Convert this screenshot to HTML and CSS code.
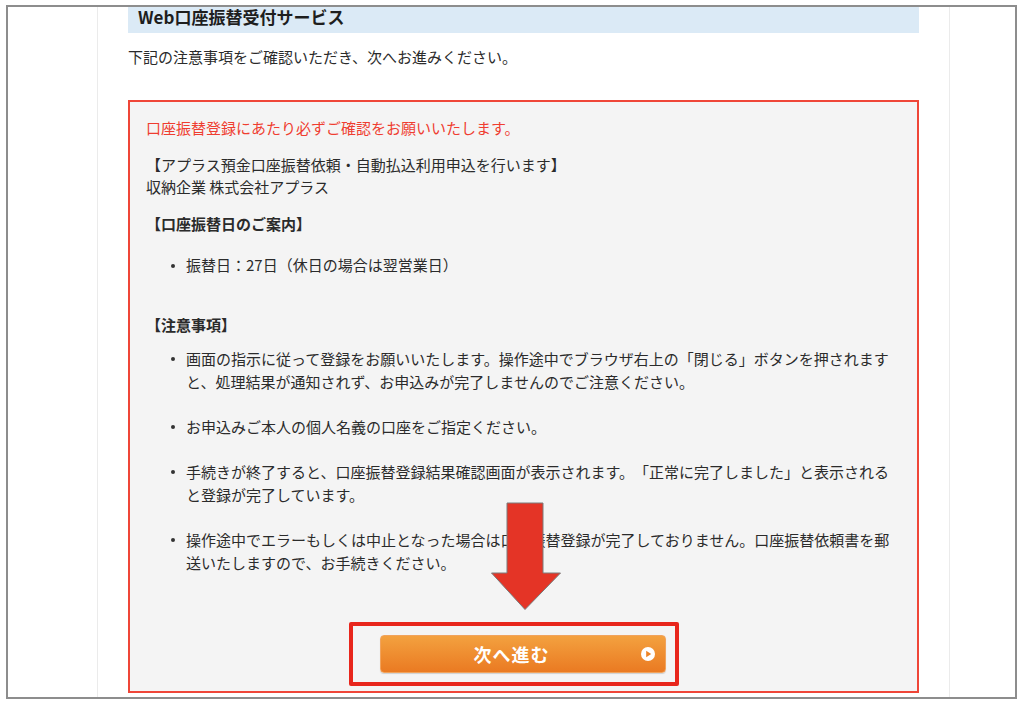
FILE: index.html
```html
<!DOCTYPE html>
<html lang="ja">
<head>
<meta charset="utf-8">
<title>Web口座振替受付サービス</title>
<link rel="stylesheet" href="styles.css">
</head>
<body>
<div class="frame">
  <div class="column">
    <h1 class="title">Web口座振替受付サービス</h1>
    <p class="intro">下記の注意事項をご確認いただき、次へお進みください。</p>
    <div class="notice">
      <p class="lead">口座振替登録にあたり必ずご確認をお願いいたします。</p>
      <p class="company">【アプラス預金口座振替依頼・自動払込利用申込を行います】<br>収納企業 株式会社アプラス</p>
      <p class="heading">【口座振替日のご案内】</p>
      <ul class="list list-date">
        <li>振替日：27日（休日の場合は翌営業日）</li>
      </ul>
      <p class="heading heading-caution">【注意事項】</p>
      <ul class="list list-caution">
        <li>画面の指示に従って登録をお願いいたします。操作途中でブラウザ右上の「閉じる」ボタンを押されますと、処理結果が通知されず、お申込みが完了しませんのでご注意ください。</li>
        <li>お申込みご本人の個人名義の口座をご指定ください。</li>
        <li>手続きが終了すると、口座振替登録結果確認画面が表示されます。「正常に完了しました」と表示されると登録が完了しています。</li>
        <li>操作途中でエラーもしくは中止となった場合は口座振替登録が完了しておりません。口座振替依頼書を郵送いたしますので、お手続きください。</li>
      </ul>
      <div class="actions">
        <button class="next-btn" type="button">次へ進む<span class="next-icon"><svg width="14" height="14" viewBox="0 0 14 14"><circle cx="7" cy="7" r="7" fill="#fff"/><polygon points="5.2,3.8 10.2,7 5.2,10.2" fill="#ee8426"/></svg></span></button>
      </div>
      <svg class="arrow" width="72" height="110" viewBox="0 0 72 110"><polygon points="17,1 53,1 53,71 70.5,71 35,107.5 1.5,71 17,71" fill="#e43426" stroke="#7a7a7a" stroke-width="1"/></svg>
      <div class="highlight"></div>
    </div>
  </div>
</div>
</body>
</html>
```

FILE: styles.css
```css
html, body {
  margin: 0;
  padding: 0;
  background: #ffffff;
}

body {
  font-family: "Noto Sans CJK JP", "Noto Sans", sans-serif;
  color: #2b2b2b;
  font-size: 15px;
  line-height: 22px;
  text-spacing-trim: space-all;
  font-feature-settings: normal;
}

.frame {
  box-sizing: border-box;
  margin: 5px 0 0 6px;
  width: 1011px;
  height: 694px;
  border: 2px solid #8d8d8d;
  background: #ffffff;
  overflow: hidden;
}

.column {
  box-sizing: border-box;
  width: 853px;
  height: 100%;
  margin-left: 89px;
  padding: 0 30px;
  border-left: 1px solid #ebebeb;
  border-right: 1px solid #ebebeb;
}

.title {
  margin: 0;
  height: 26px;
  padding-left: 10px;
  background: #dbeaf6;
  font-size: 17px;
  font-weight: bold;
  line-height: 20px;
  color: #1e1e1e;
}

.intro {
  margin: 13px 0 32px;
  line-height: 22px;
}

.notice {
  position: relative;
  border: 2px solid #ef4638;
  background: #f4f4f4;
  padding: 15px 18px 18px 16px;
}

.notice p {
  margin: 0;
}

.lead {
  color: #ef3d30;
  margin-bottom: 15px !important;
}

.company {
  margin-bottom: 15px !important;
}

.heading {
  font-weight: bold;
}

.heading-caution {
  margin-top: 38px !important;
}

.list {
  margin: 19px 0 0;
  padding-left: 40px;
  list-style: none;
}

.list li {
  position: relative;
}

.list li::before {
  content: "";
  position: absolute;
  left: -15px;
  top: 10px;
  width: 4px;
  height: 4px;
  border-radius: 50%;
  background: #333333;
}

.list-caution {
  margin-top: 11px;
}

.list-caution li {
  line-height: 23px;
  margin-bottom: 22px;
}

.list-caution li::before {
  top: 10px;
}

.list-caution li:last-child {
  margin-bottom: 0;
}

.actions {
  display: flex;
  justify-content: center;
  margin-top: 61px;
}

.next-btn {
  position: relative;
  box-sizing: border-box;
  width: 286px;
  height: 38px;
  padding: 0 22px 0 0;
  border: 1px solid #f1a35c;
  border-radius: 4px;
  background: linear-gradient(#f3a13f, #ea7a22);
  box-shadow: 0 1px 1px rgba(0, 0, 0, 0.15);
  color: #ffffff;
  font-family: "Noto Sans CJK JP", sans-serif;
  font-size: 18px;
  font-weight: bold;
  letter-spacing: 1px;
  line-height: 36px;
}

.next-icon {
  position: absolute;
  right: 10px;
  top: 11px;
  width: 14px;
  height: 14px;
  line-height: 0;
}

.arrow {
  position: absolute;
  left: 360px;
  top: 400px;
}

.highlight {
  position: absolute;
  box-sizing: border-box;
  left: 219px;
  top: 520px;
  width: 330px;
  height: 64px;
  border: 4px solid #e8261c;
  border-radius: 2px;
}
```
